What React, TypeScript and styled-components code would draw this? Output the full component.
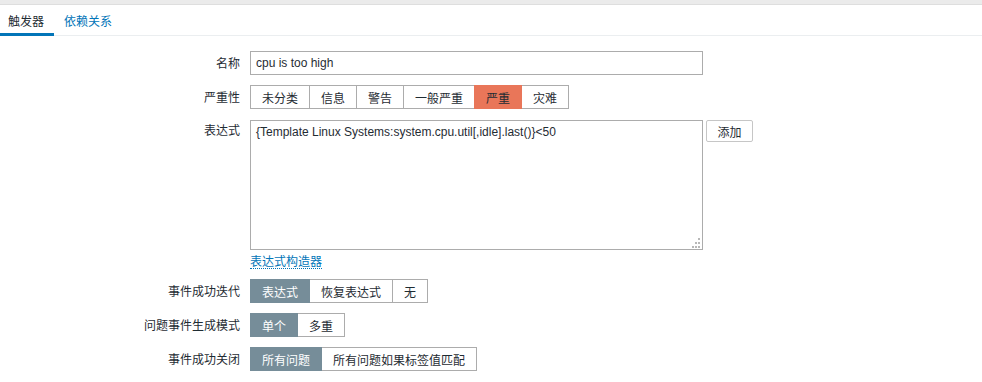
import { createGlobalStyle, styled } from "styled-components";

const GlobalStyle = createGlobalStyle`
  html, body {
    margin: 0;
    padding: 0;
    background: #ffffff;
  }
  body {
    font-family: "Liberation Sans", Arial, "Noto Sans CJK SC", sans-serif;
    font-size: 12px;
    color: #1f2c33;
  }
`;

type Option = { label: string };

const severities = ["未分类", "信息", "警告", "一般严重", "严重", "灾难"];

export default function App() {
  return (
    <Page>
      <GlobalStyle />
      <TopStrip />
      <TabBar>
        <Tab $active>触发器</Tab>
        <Tab>依赖关系</Tab>
      </TabBar>
      <Form>
        <Label>名称</Label>
        <Field>
          <TextInput defaultValue="cpu is too high" />
        </Field>

        <Label>严重性</Label>
        <Field>
          <Segments>
            {severities.map((s) => (
              <Segment key={s} $active={s === "严重"} $tone="danger">
                {s}
              </Segment>
            ))}
          </Segments>
        </Field>

        <Label $top={3}>表达式</Label>
        <Field $gapTop={11}>
          <ExprRow>
            <AreaWrap>
              <ExprArea defaultValue="{Template Linux Systems:system.cpu.util[,idle].last()}<50" />
              <Grip width="10" height="10" viewBox="0 0 10 10">
                <rect x="8" y="0" width="2" height="2" fill="#b8b8b8" />
                <rect x="5" y="4" width="2" height="2" fill="#b8b8b8" />
                <rect x="8" y="4" width="2" height="2" fill="#b8b8b8" />
                <rect x="2" y="8" width="2" height="2" fill="#b8b8b8" />
                <rect x="5" y="8" width="2" height="2" fill="#b8b8b8" />
                <rect x="8" y="8" width="2" height="2" fill="#b8b8b8" />
              </Grip>
            </AreaWrap>
            <AddButton>添加</AddButton>
          </ExprRow>
          <BuilderLink>表达式构造器</BuilderLink>
        </Field>

        <Label>事件成功迭代</Label>
        <Field>
          <SegmentGroup
            options={[{ label: "表达式" }, { label: "恢复表达式" }, { label: "无" }]}
            active={0}
          />
        </Field>

        <Label>问题事件生成模式</Label>
        <Field>
          <SegmentGroup options={[{ label: "单个" }, { label: "多重" }]} active={0} />
        </Field>

        <Label>事件成功关闭</Label>
        <Field>
          <SegmentGroup
            options={[{ label: "所有问题" }, { label: "所有问题如果标签值匹配" }]}
            active={0}
          />
        </Field>
      </Form>
    </Page>
  );
}

function SegmentGroup(props: { options: Option[]; active: number }) {
  return (
    <Segments>
      {props.options.map((o, i) => (
        <Segment key={o.label} $active={i === props.active} $tone="neutral">
          {o.label}
        </Segment>
      ))}
    </Segments>
  );
}

const Page = styled.div`
  width: 982px;
  min-height: 382px;
  background: #ffffff;
`;

const TopStrip = styled.div`
  height: 4px;
  background: #ebebeb;
  border-bottom: 1px solid #dedede;
`;

const TabBar = styled.div`
  display: flex;
  height: 30px;
  border-bottom: 1px solid #ebeef0;
`;

const Tab = styled.div<{ $active?: boolean }>`
  display: flex;
  align-items: center;
  padding: 2px 10px 0 8px;
  margin-right: 2px;
  font-size: 12px;
  font-family: "Noto Sans CJK SC", sans-serif;
  color: ${(p) => (p.$active ? "#1f2c33" : "#0275b8")};
  border-bottom: 3px solid ${(p) => (p.$active ? "#0275b8" : "transparent")};
  margin-bottom: -1px;
`;

const Form = styled.div`
  display: grid;
  grid-template-columns: 240px 1fr;
  column-gap: 10px;
  row-gap: 10px;
  padding-top: 15px;
`;

const Label = styled.div<{ $top?: number }>`
  text-align: right;
  font-family: "Noto Sans CJK SC", sans-serif;
  font-size: 12px;
  line-height: 16px;
  padding-top: ${(p) => p.$top ?? 4}px;
  color: #1f2c33;
`;

const Field = styled.div<{ $gapTop?: number }>`
  display: flex;
  flex-direction: column;
  align-items: flex-start;
  margin-top: ${(p) => (p.$gapTop ? p.$gapTop - 10 : 0)}px;
`;

const TextInput = styled.input`
  box-sizing: border-box;
  width: 453px;
  height: 24px;
  border: 1px solid #acacac;
  padding: 0 5px;
  font-family: "Liberation Sans", Arial, sans-serif;
  font-size: 12px;
  color: #1f2c33;
  outline: none;
`;

const Segments = styled.div`
  display: flex;
  height: 24px;
`;

const Segment = styled.div<{ $active?: boolean; $tone: "danger" | "neutral" }>`
  box-sizing: border-box;
  display: flex;
  align-items: center;
  height: 24px;
  padding: 0 11px;
  margin-left: -1px;
  font-family: "Noto Sans CJK SC", sans-serif;
  font-size: 12px;
  border: 1px solid
    ${(p) =>
      p.$active ? (p.$tone === "danger" ? "#e97659" : "#768d99") : "#acacac"};
  background: ${(p) =>
    p.$active ? (p.$tone === "danger" ? "#e97659" : "#768d99") : "#ffffff"};
  color: ${(p) => (p.$active && p.$tone === "neutral" ? "#ffffff" : "#1f2c33")};
  position: relative;
  z-index: ${(p) => (p.$active ? 1 : 0)};
  &:first-child {
    margin-left: 0;
  }
`;

const ExprRow = styled.div`
  display: flex;
  align-items: flex-start;
  gap: 3px;
`;

const AreaWrap = styled.div`
  position: relative;
  width: 453px;
  height: 130px;
`;

const ExprArea = styled.textarea`
  box-sizing: border-box;
  display: block;
  width: 453px;
  height: 130px;
  border: 1px solid #acacac;
  padding: 4px 5px;
  margin: 0;
  resize: none;
  outline: none;
  font-family: "Liberation Sans", Arial, sans-serif;
  font-size: 12px;
  line-height: 14px;
  color: #1f2c33;
`;

const Grip = styled.svg`
  position: absolute;
  right: 3px;
  bottom: 2px;
`;

const AddButton = styled.div`
  box-sizing: border-box;
  display: flex;
  align-items: center;
  justify-content: center;
  width: 47px;
  height: 22px;
  border: 1px solid #c6c6c6;
  border-radius: 2px;
  background: #ffffff;
  font-family: "Noto Sans CJK SC", sans-serif;
  font-size: 12px;
  color: #1f2c33;
`;

const BuilderLink = styled.span`
  margin-top: 4px;
  font-family: "Noto Sans CJK SC", sans-serif;
  font-size: 12px;
  line-height: 14px;
  color: #0275b8;
  border-bottom: 1px dotted #0275b8;
`;
